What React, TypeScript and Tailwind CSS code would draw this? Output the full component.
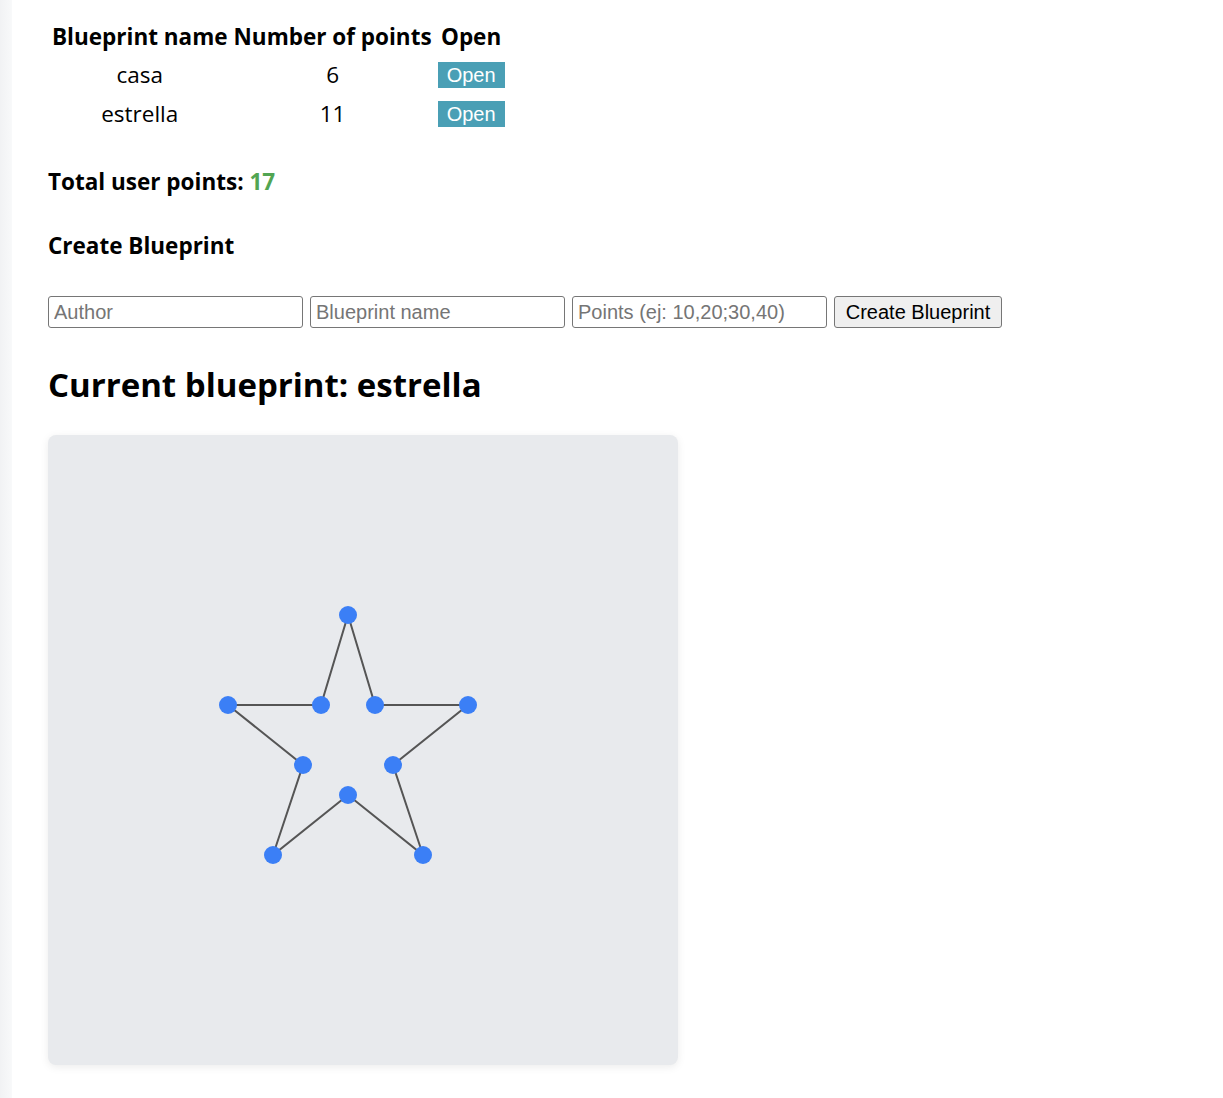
const blueprints = [
    { name: "casa", points: 6 },
    { name: "estrella", points: 11 },
];

// star points, relative to the 630x630 canvas
const star: [number, number][] = [
    [300, 180],
    [327, 270],
    [420, 270],
    [345, 330],
    [375, 420],
    [300, 360],
    [225, 420],
    [255, 330],
    [180, 270],
    [273, 270],
];

function BlueprintCanvas() {
    const d = star.map(([x, y], i) => `${i === 0 ? "M" : "L"}${x} ${y}`).join(" ") + " Z";
    return (
        <div className="h-[630px] w-[630px] rounded-lg bg-[#e8eaed] shadow-[0_2px_8px_rgba(0,0,0,0.08)]">
            <svg width="630" height="630" viewBox="0 0 630 630">
                <path d={d} fill="none" stroke="#555" strokeWidth="2" />
                {star.map(([x, y], i) => (
                    <circle key={i} cx={x} cy={y} r="9" fill="#3b7ff6" />
                ))}
            </svg>
        </div>
    );
}

export default function App() {
    return (
        <div className="flex min-h-[1098px] bg-white font-['Open_Sans',sans-serif] text-black">
            <div className="w-[12px] shrink-0 bg-gradient-to-r from-[#f1f2f4] to-[#f8f9fa]" />
            <div className="flex flex-col pl-[36px] pt-[17px]">
                <table className="border-separate border-spacing-[2px] self-start">
                    <thead>
                        <tr className="h-[35px]">
                            <th className="px-[2px] text-center text-[22.5px] font-bold">Blueprint name</th>
                            <th className="px-[2px] text-center text-[22.5px] font-bold">Number of points</th>
                            <th className="px-[2px] text-center text-[22.5px] font-bold">Open</th>
                        </tr>
                    </thead>
                    <tbody>
                        {blueprints.map((bp) => (
                            <tr key={bp.name} className="h-[37px]">
                                <td className="px-[2px] text-center text-[22.5px]">{bp.name}</td>
                                <td className="px-[2px] text-center text-[22.5px]">{bp.points}</td>
                                <td className="px-[2px] text-center">
                                    <button className="h-[26px] w-[67px] bg-[#4a9fb5] font-['Liberation_Sans',sans-serif] text-[20px] leading-[26px] text-white">
                                        Open
                                    </button>
                                </td>
                            </tr>
                        ))}
                    </tbody>
                </table>

                <p className="mt-[36px] text-[22.5px] leading-[24px] font-bold">
                    Total user points: <span className="text-[#52a552]">17</span>
                </p>

                <h3 className="mt-[40px] text-[22.5px] leading-[24px] font-bold">Create Blueprint</h3>

                <form className="mt-[38px] flex gap-[7px] font-['Liberation_Sans',sans-serif] text-[20px]">
                    <input
                        placeholder="Author"
                        className="h-[32px] w-[255px] rounded-[3px] border border-[#767676] px-[5px] placeholder:text-[#757575]"
                    />
                    <input
                        placeholder="Blueprint name"
                        className="h-[32px] w-[255px] rounded-[3px] border border-[#767676] px-[5px] placeholder:text-[#757575]"
                    />
                    <input
                        placeholder="Points (ej: 10,20;30,40)"
                        className="h-[32px] w-[255px] rounded-[3px] border border-[#767676] px-[5px] placeholder:text-[#757575]"
                    />
                    <button
                        type="button"
                        className="h-[32px] w-[168px] rounded-[3px] border border-[#767676] bg-[#efefef]"
                    >
                        Create Blueprint
                    </button>
                </form>

                <h2 className="mt-[37px] text-[33px] leading-[40px] font-bold">Current blueprint: estrella</h2>

                <div className="mt-[30px]">
                    <BlueprintCanvas />
                </div>
            </div>
        </div>
    );
}
